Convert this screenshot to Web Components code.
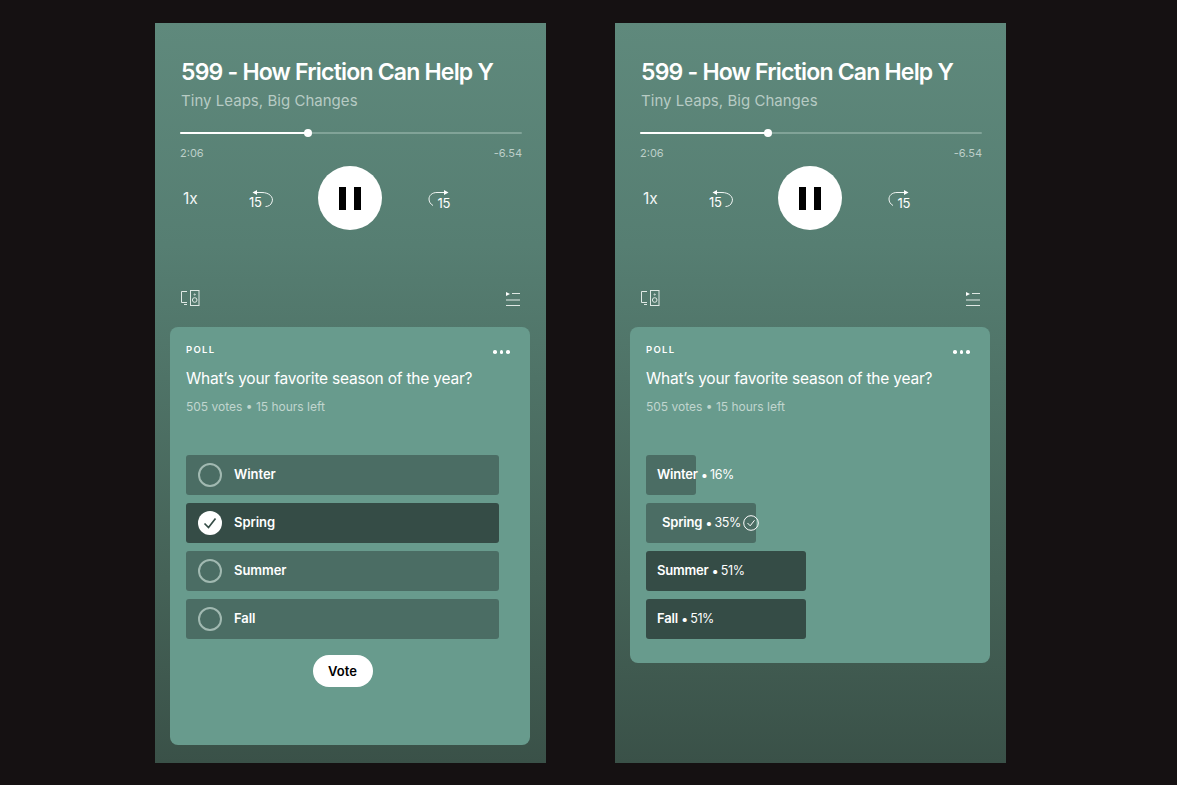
<!DOCTYPE html>
<html>
<head>
<meta charset="utf-8">
<title>Poll</title>
<style>
  html, body { margin: 0; height: 100%; background: #151112; overflow: hidden; }
  body { font-family: Inter, "Noto Sans", sans-serif; }
</style>
</head>
<body>
<player-page></player-page>

<template id="page-template">
  <style>
    :host { display: flex; gap: 69px; padding: 23px 0 0 155px; }
  </style>
  <player-screen>
    <poll-card title-text="What’s your favorite season of the year?" meta="505 votes • 15 hours left" pad-bottom="58">
      <poll-option>Winter</poll-option>
      <poll-option selected>Spring</poll-option>
      <poll-option>Summer</poll-option>
      <poll-option>Fall</poll-option>
      <vote-button slot="footer">Vote</vote-button>
    </poll-card>
  </player-screen>
  <player-screen>
    <poll-card title-text="What’s your favorite season of the year?" meta="505 votes • 15 hours left" pad-bottom="24">
      <poll-result fill="50" inset="11" percent="16%">Winter</poll-result>
      <poll-result fill="110" inset="16" percent="35%" voted>Spring</poll-result>
      <poll-result fill="160" inset="11" percent="51%" leading>Summer</poll-result>
      <poll-result fill="160" inset="11" percent="51%" leading>Fall</poll-result>
    </poll-card>
  </player-screen>
</template>

<script>
/* eslint-disable no-underscore-dangle */
const screenTemplate = document.createElement('template');
screenTemplate.innerHTML = `
  <style>
    :host {
      display: flex;
      flex-direction: column;
      width: 391px;
      height: 740px;
      color: #fff;
      background: linear-gradient(180deg, #5f897c 0%, #567e72 30%, #4f7367 48%, #456257 75%, #3a5148 100%);
    }
    .title {
      margin: 33px 0 0 26px;
      font-size: 23px;
      line-height: 32px;
      font-weight: 600;
      letter-spacing: -0.8px;
      white-space: nowrap;
    }
    .show {
      margin: 2px 0 0 26px;
      font-size: 15px;
      line-height: 22px;
      letter-spacing: 0.03px;
      color: #b7cbc4;
    }
    .tools {
      display: flex;
      justify-content: space-between;
      align-items: center;
      margin: 58px 25px 19px;
      height: 20px;
    }
    svg { display: block; }
    .cards { margin: 0 16px 0 15px; }
  </style>
  <div class="title">599 - How Friction Can Help Y</div>
  <div class="show">Tiny Leaps, Big Changes</div>
  <progress-bar elapsed="2:06" remaining="-6.54" played="128"></progress-bar>
  <transport-controls></transport-controls>
  <div class="tools">
    <svg width="20" height="17" viewBox="0 0 20 17" fill="none" stroke="#dfe8e4" stroke-width="1">
      <path d="M7 1.5H1.5V12.5H7"/>
      <path d="M4 14.5H7"/>
      <rect x="10.5" y="0.5" width="8.5" height="15"/>
      <circle cx="14.7" cy="10" r="2.3"/>
      <circle cx="14.7" cy="4.5" r="0.6"/>
    </svg>
    <svg width="16" height="17" viewBox="0 0 16 17" fill="none" stroke="#dfe8e4" stroke-width="1">
      <path d="M1 2l4 2-4 2z" fill="#fff" stroke="none"/>
      <path d="M7 3.5H15"/>
      <path d="M1 10H15"/>
      <path d="M1 15.5H15"/>
    </svg>
  </div>
  <div class="cards"><slot></slot></div>
`;

class PlayerScreen extends HTMLElement {
  constructor() {
    super();
    this._shadowRoot = this.attachShadow({ mode: 'open' });
    this._shadowRoot.appendChild(screenTemplate.content.cloneNode(true));
  }
}

const progressTemplate = document.createElement('template');
progressTemplate.innerHTML = `
  <style>
    :host { display: block; margin: 20px 24px 0 25px; }
    .track {
      position: relative;
      height: 2px;
      border-radius: 1px;
      background: #81a398;
    }
    .played { height: 100%; background: #fff; border-radius: 1px; }
    .thumb {
      position: absolute;
      top: -3px;
      width: 8px;
      height: 8px;
      margin-left: -4px;
      border-radius: 50%;
      background: #fff;
    }
    .times {
      display: flex;
      justify-content: space-between;
      margin-top: 12px;
      font-size: 11px;
      line-height: 14px;
      color: #bdcfc9;
    }
  </style>
  <div class="track"><div class="played"></div><div class="thumb"></div></div>
  <div class="times"><span class="elapsed"></span><span class="remaining"></span></div>
`;

class ProgressBar extends HTMLElement {
  constructor() {
    super();
    this._shadowRoot = this.attachShadow({ mode: 'open' });
    this._shadowRoot.appendChild(progressTemplate.content.cloneNode(true));
    this.$played = this._shadowRoot.querySelector('.played');
    this.$thumb = this._shadowRoot.querySelector('.thumb');
    this.$elapsed = this._shadowRoot.querySelector('.elapsed');
    this.$remaining = this._shadowRoot.querySelector('.remaining');
  }

  connectedCallback() {
    const played = this.getAttribute('played');
    this.$played.style.width = `${played}px`;
    this.$thumb.style.left = `${played}px`;
    this.$elapsed.innerText = this.getAttribute('elapsed');
    this.$remaining.innerText = this.getAttribute('remaining');
  }
}

const transportTemplate = document.createElement('template');
transportTemplate.innerHTML = `
  <style>
    :host {
      display: flex;
      align-items: center;
      height: 64px;
      margin: 6px 0 0 28px;
    }
    .speed { width: 16px; font-size: 15.5px; color: #f2f6f4; white-space: nowrap; margin-top: 1px; }
    .back { margin-left: 50px; }
    .pause {
      display: flex;
      justify-content: center;
      align-items: center;
      gap: 8px;
      width: 64px;
      height: 64px;
      margin: 0 45px;
      border-radius: 50%;
      background: #fff;
    }
    .pause i { display: block; width: 7px; height: 23px; background: #000; }
    svg { display: block; margin-top: 3px; }
    .forward { margin-left: 1px; }
    svg text { font-family: Inter, sans-serif; font-size: 13px; fill: #fff; letter-spacing: -0.3px; }
  </style>
  <span class="speed">1x</span>
  <svg class="back" width="24" height="24" viewBox="0 0 24 24" fill="none" stroke="#f2f6f4" stroke-width="1">
    <path d="M7 4.5H13C20 4.5 25 9 23 14C22 17 19.5 18.5 16.5 18.5"/>
    <path d="M3.5 4.5L8 2V7z" fill="#fff" stroke="none"/>
    <text x="0" y="19" stroke="none">15</text>
  </svg>
  <svg class="forward" width="24" height="24" viewBox="0 0 24 24" fill="none" stroke="#f2f6f4" stroke-width="1">
    <path d="M16 4.5H9C4 4.5 1 7.5 1 11C1 14 2.5 16 5 17.5"/>
    <path d="M20.5 4.5L16 2V7z" fill="#fff" stroke="none"/>
    <text x="9.5" y="20" stroke="none">15</text>
  </svg>
`;

class TransportControls extends HTMLElement {
  constructor() {
    super();
    this._shadowRoot = this.attachShadow({ mode: 'open' });
    this._shadowRoot.appendChild(transportTemplate.content.cloneNode(true));
    // pause button goes between the two skip icons
    const $pause = document.createElement('div');
    $pause.className = 'pause';
    $pause.innerHTML = '<i></i><i></i>';
    this.$forward = this._shadowRoot.querySelector('.forward');
    this._shadowRoot.insertBefore($pause, this.$forward);
  }
}

const cardTemplate = document.createElement('template');
cardTemplate.innerHTML = `
  <style>
    :host {
      display: block;
      padding: 15px 31px 0 16px;
      border-radius: 8px;
      background: #689b8d;
      color: #fff;
    }
    .head { display: flex; justify-content: space-between; align-items: center; height: 14px; }
    .label { font-size: 9.5px; font-weight: 600; letter-spacing: 1.3px; }
    .more { display: flex; gap: 3px; margin: 6px -11px 0 0; }
    .more i { display: block; width: 3.6px; height: 3.6px; border-radius: 50%; background: #fff; }
    .question { margin-top: 12px; font-size: 15.5px; line-height: 22px; letter-spacing: -0.21px; white-space: nowrap; }
    .meta { margin-top: 9px; font-size: 12px; line-height: 16px; color: #c1d6cf; white-space: nowrap; }
    .list { display: flex; flex-direction: column; gap: 8px; margin-top: 40px; }
    .footer { display: flex; justify-content: center; margin-top: 16px; }
  </style>
  <div class="head"><span class="label">POLL</span><span class="more"><i></i><i></i><i></i></span></div>
  <div class="question"></div>
  <div class="meta"></div>
  <div class="list"><slot></slot></div>
  <div class="footer"><slot name="footer"></slot></div>
`;

class PollCard extends HTMLElement {
  constructor() {
    super();
    this._shadowRoot = this.attachShadow({ mode: 'open' });
    this._shadowRoot.appendChild(cardTemplate.content.cloneNode(true));
    this.$question = this._shadowRoot.querySelector('.question');
    this.$meta = this._shadowRoot.querySelector('.meta');
    this.$footer = this._shadowRoot.querySelector('.footer');
  }

  connectedCallback() {
    this.$question.innerText = this.getAttribute('title-text');
    this.$meta.innerText = this.getAttribute('meta');
    this.style.paddingBottom = `${this.getAttribute('pad-bottom')}px`;
    if (!this.querySelector('[slot="footer"]')) this.$footer.style.display = 'none';
  }
}

const optionTemplate = document.createElement('template');
optionTemplate.innerHTML = `
  <style>
    :host {
      display: flex;
      align-items: center;
      gap: 12px;
      height: 40px;
      padding-left: 12px;
      border-radius: 3px;
      background: #4b6d64;
      font-size: 13px;
      font-weight: 600;
      letter-spacing: -0.05px;
      color: #fff;
    }
    :host([selected]) { background: #354c46; }
    .radio {
      box-sizing: border-box;
      width: 24px;
      height: 24px;
      border: 2px solid #a1b9b1;
      border-radius: 50%;
    }
    svg { display: none; width: 24px; height: 24px; }
    :host([selected]) .radio { display: none; }
    :host([selected]) svg { display: block; }
    span { margin-top: -3px; }
  </style>
  <div class="radio"></div>
  <svg viewBox="0 0 24 24">
    <circle cx="12" cy="12" r="12" fill="#fff"/>
    <path d="M6.5 12.5L10.5 16.5L17.5 7.5" fill="none" stroke="#354c46" stroke-width="1.7"/>
  </svg>
  <span><slot></slot></span>
`;

class PollOption extends HTMLElement {
  constructor() {
    super();
    this._shadowRoot = this.attachShadow({ mode: 'open' });
    this._shadowRoot.appendChild(optionTemplate.content.cloneNode(true));
  }
}

const resultTemplate = document.createElement('template');
resultTemplate.innerHTML = `
  <style>
    :host {
      display: flex;
      align-items: center;
      box-sizing: border-box;
      height: 40px;
      border-radius: 3px;
      background: #4b6d64;
      font-size: 13px;
      color: #fff;
      white-space: nowrap;
    }
    :host([leading]) { background: #354c46; }
    b { font-weight: 600; flex: none; letter-spacing: -0.2px; margin-top: -3px; }
    .dot { margin: -1px 2px 0 3px; flex: none; font-size: 13px; }
    .percent { flex: none; font-size: 12.5px; letter-spacing: -0.4px; margin-top: -1px; }
    svg { display: none; flex: none; margin-left: 2px; }
    :host([voted]) svg { display: block; }
  </style>
  <b><slot></slot></b><span class="dot">•</span><span class="percent"></span>
  <svg width="16" height="16" viewBox="0 0 16 16" fill="none" stroke="#fff">
    <circle cx="8" cy="8" r="7.3"/>
    <path d="M4.5 8L7.2 10.8L11.5 5.3"/>
  </svg>
`;

class PollResult extends HTMLElement {
  constructor() {
    super();
    this._shadowRoot = this.attachShadow({ mode: 'open' });
    this._shadowRoot.appendChild(resultTemplate.content.cloneNode(true));
    this.$percent = this._shadowRoot.querySelector('.percent');
  }

  connectedCallback() {
    this.style.width = `${this.getAttribute('fill')}px`;
    this.style.paddingLeft = `${this.getAttribute('inset')}px`;
    this.$percent.innerText = this.getAttribute('percent');
  }
}

const voteTemplate = document.createElement('template');
voteTemplate.innerHTML = `
  <style>
    :host {
      display: flex;
      justify-content: center;
      align-items: center;
      width: 60px;
      height: 32px;
      border-radius: 16px;
      background: #fff;
      color: #000;
      font-size: 13px;
      font-weight: 600;
    }
  </style>
  <slot></slot>
`;

class VoteButton extends HTMLElement {
  constructor() {
    super();
    this._shadowRoot = this.attachShadow({ mode: 'open' });
    this._shadowRoot.appendChild(voteTemplate.content.cloneNode(true));
  }
}

class PlayerPage extends HTMLElement {
  constructor() {
    super();
    this._shadowRoot = this.attachShadow({ mode: 'open' });
    this._shadowRoot.appendChild(document.getElementById('page-template').content.cloneNode(true));
  }
}

customElements.define('player-screen', PlayerScreen);
customElements.define('progress-bar', ProgressBar);
customElements.define('transport-controls', TransportControls);
customElements.define('poll-card', PollCard);
customElements.define('poll-option', PollOption);
customElements.define('poll-result', PollResult);
customElements.define('vote-button', VoteButton);
customElements.define('player-page', PlayerPage);
</script>
</body>
</html>
